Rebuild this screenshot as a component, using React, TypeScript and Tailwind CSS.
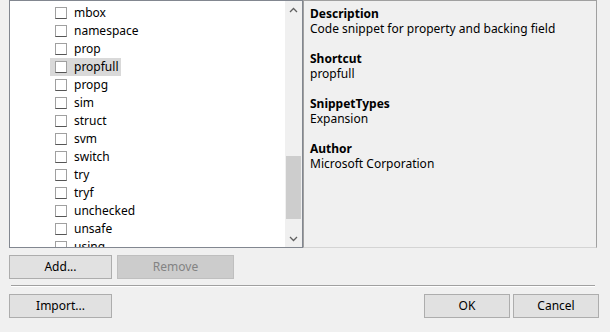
import React from "react";

const items = ["mbox", "namespace", "prop", "propfull", "propg", "sim", "struct", "svm", "switch", "try", "tryf", "unchecked", "unsafe", "using"];

const details = [
  { label: "Description", value: "Code snippet for property and backing field" },
  { label: "Shortcut", value: "propfull" },
  { label: "SnippetTypes", value: "Expansion" },
  { label: "Author", value: "Microsoft Corporation" },
];

function Check() {
  return <span className="h-[12px] w-[12px] shrink-0 border border-[#a0a0a0] border-b-dotted border-b-[#555] bg-white" />;
}

function Btn({ children, w, disabled }: { children: React.ReactNode; w: string; disabled?: boolean }) {
  return (
    <button
      className={`h-[24px] ${w} border text-[12px] ${disabled ? "border-[#bfbfbf] bg-[#cccccc] text-[#838383]" : "border-[#adadad] bg-[#e1e1e1] text-black"}`}
    >
      {children}
    </button>
  );
}

export default function App() {
  return (
    <div className="h-[332px] w-[610px] overflow-hidden bg-[#f0f0f0] text-[12px] text-black" style={{ fontFamily: '"Noto Sans", "Open Sans", sans-serif' }}>
      <div className="flex h-[248px] pl-[9px]">
        <div className="flex h-full w-[294px] border border-[#828790] bg-white">
          <div className="flex-1 overflow-hidden pt-[3px]">
            {items.map((it) => (
              <div key={it} className="flex h-[18px] items-center pl-[40px]">
                <div className={`flex h-[18px] items-center gap-[7px] pl-[5px] pr-[3px] ${it === "propfull" ? "bg-[#d9d9d9]" : ""}`}>
                  <Check />
                  <span className="leading-none">{it}</span>
                </div>
              </div>
            ))}
          </div>
          <div className="flex w-[17px] flex-col bg-[#f0f0f0]">
            <div className="flex h-[17px] items-center justify-center">
              <svg width="9" height="6" viewBox="0 0 9 6"><path d="M1 5 L4.5 1.5 L8 5" fill="none" stroke="#606060" strokeWidth="1.3" /></svg>
            </div>
            <div className="h-[138px]" />
            <div className="mx-px h-[63px] bg-[#cdcdcd]" />
            <div className="flex-1" />
            <div className="flex h-[17px] items-center justify-center">
              <svg width="9" height="6" viewBox="0 0 9 6"><path d="M1 1 L4.5 4.5 L8 1" fill="none" stroke="#606060" strokeWidth="1.3" /></svg>
            </div>
          </div>
        </div>
        <div className="flex h-full w-[294px] flex-col gap-[15px] border border-[#a0a0a0] border-b-[#d4d4d4] pl-[6px] pt-[5px]">
          {details.map((d) => (
            <div key={d.label} className="leading-[15px]">
              <div className="font-bold">{d.label}</div>
              <div>{d.value}</div>
            </div>
          ))}
        </div>
      </div>
      <div className="mt-[7px] flex gap-[5px] pl-[9px]">
        <Btn w="w-[103px]">Add...</Btn>
        <Btn w="w-[117px]" disabled>Remove</Btn>
      </div>
      <div className="ml-[11px] mt-[6px] h-[2px] w-[584px] border-t border-b border-t-[#a0a0a0] border-b-white" />
      <div className="mt-[7px] flex pl-[9px]">
        <Btn w="w-[103px]">Import...</Btn>
        <div className="flex-1" />
        <div className="mr-[11px] flex gap-[3px]">
          <Btn w="w-[86px]">OK</Btn>
          <Btn w="w-[86px]">Cancel</Btn>
        </div>
      </div>
    </div>
  );
}
